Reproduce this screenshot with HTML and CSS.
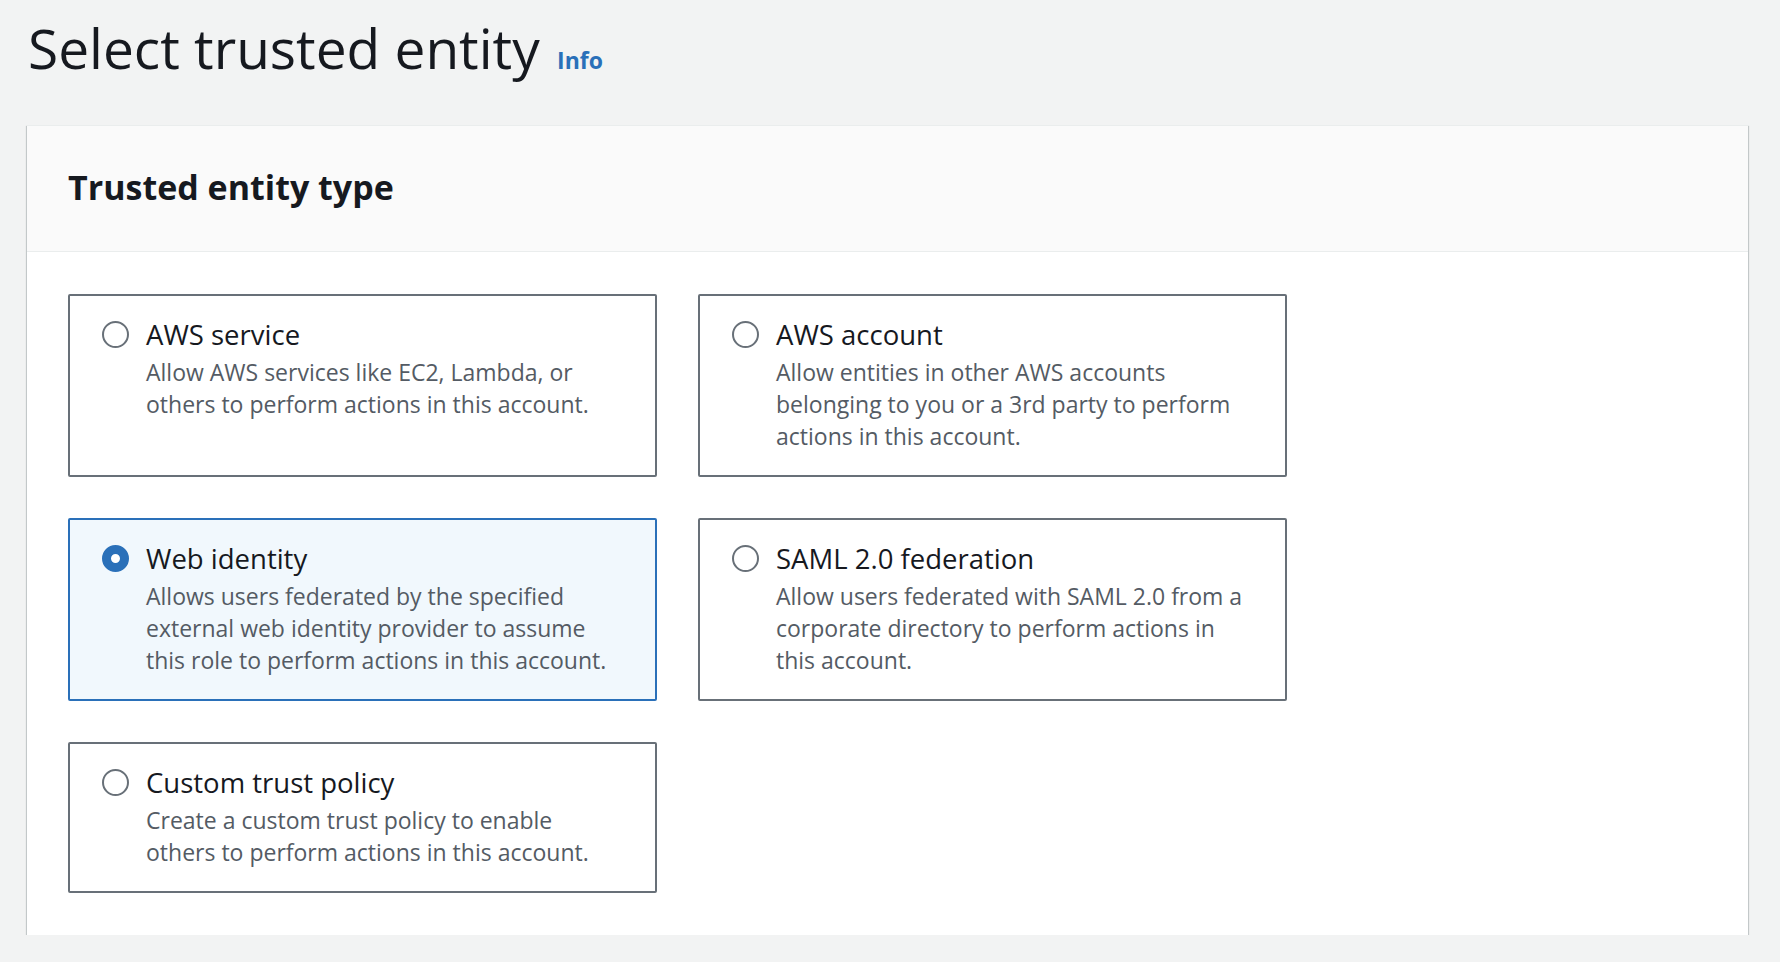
FILE: index.html
```html
<!DOCTYPE html>
<html lang="en">
<head>
<meta charset="utf-8">
<title>Select trusted entity</title>
<link rel="stylesheet" href="styles.css">
</head>
<body>
<main class="page">
  <h1 class="page-title">Select trusted entity <a class="info-link" href="#">Info</a></h1>
  <section class="panel">
    <header class="panel-header">
      <h2 class="panel-title">Trusted entity type</h2>
    </header>
    <div class="panel-body">
      <div class="tiles">
        <label class="tile">
          <span class="radio"></span>
          <span class="tile-text">
            <span class="tile-title">AWS service</span>
            <span class="tile-desc">Allow AWS services like EC2, Lambda, or others to perform actions in this account.</span>
          </span>
        </label>
        <label class="tile">
          <span class="radio"></span>
          <span class="tile-text">
            <span class="tile-title">AWS account</span>
            <span class="tile-desc">Allow entities in other AWS accounts belonging to you or a 3rd party to perform actions in this account.</span>
          </span>
        </label>
        <label class="tile selected">
          <span class="radio checked"></span>
          <span class="tile-text">
            <span class="tile-title">Web identity</span>
            <span class="tile-desc">Allows users federated by the specified external web identity provider to assume this role to perform actions in this account.</span>
          </span>
        </label>
        <label class="tile">
          <span class="radio"></span>
          <span class="tile-text">
            <span class="tile-title">SAML 2.0 federation</span>
            <span class="tile-desc">Allow users federated with SAML 2.0 from a corporate directory to perform actions in this account.</span>
          </span>
        </label>
        <label class="tile">
          <span class="radio"></span>
          <span class="tile-text">
            <span class="tile-title">Custom trust policy</span>
            <span class="tile-desc">Create a custom trust policy to enable others to perform actions in this account.</span>
          </span>
        </label>
      </div>
    </div>
  </section>
</main>
</body>
</html>
```
FILE: styles.css
```css
* {
  box-sizing: border-box;
}

html, body {
  margin: 0;
  padding: 0;
}

body {
  background: #f2f3f3;
  font-family: "Open Sans", "Noto Sans", "Liberation Sans", sans-serif;
  color: #16191f;
}

.page {
  padding: 15px 32px 0 27px;
}

.page-title {
  margin: 0 0 32px 1px;
  font-size: 55px;
  line-height: 66px;
  font-weight: 400;
  color: #16191f;
}

.info-link {
  margin-left: 3px;
  font-size: 23px;
  font-weight: 700;
  color: #2a70b9;
  text-decoration: none;
}

.panel {
  background: #ffffff;
  border-top: 1px solid #eaeded;
  box-shadow: 0 1px 1px 0 rgba(0, 28, 36, 0.3), 1px 1px 1px 0 rgba(0, 28, 36, 0.15), -1px 1px 1px 0 rgba(0, 28, 36, 0.15);
}

.panel-header {
  background: #fafafa;
  border-bottom: 1px solid #eaeded;
  padding: 39px 41px 42px;
}

.panel-title {
  margin: 0;
  font-size: 34px;
  line-height: 44px;
  font-weight: 700;
  color: #16191f;
}

.panel-body {
  padding: 42px 41px 42px;
}

.tiles {
  display: grid;
  grid-template-columns: repeat(2, 589px);
  column-gap: 41px;
  row-gap: 41px;
}

.tile {
  display: flex;
  align-items: flex-start;
  gap: 17px;
  border: 2px solid #687078;
  border-radius: 2px;
  background: #ffffff;
  padding: 21px 37px 23px 32px;
  cursor: pointer;
}

.tile.selected {
  border-color: #2a70b9;
  background: #f1f8fd;
}

.radio {
  flex: none;
  width: 27px;
  height: 27px;
  margin-top: 4px;
  border-radius: 50%;
  border: 2px solid #687078;
  background: #ffffff;
}

.radio.checked {
  border: 9px solid #2a70b9;
  background: #ffffff;
}

.tile-text {
  display: flex;
  flex-direction: column;
  min-width: 0;
}

.tile-title {
  font-size: 27.5px;
  line-height: 36px;
  color: #16191f;
  margin-bottom: 3px;
}

.tile-desc {
  font-size: 23px;
  line-height: 32px;
  color: #545b64;
}
```
